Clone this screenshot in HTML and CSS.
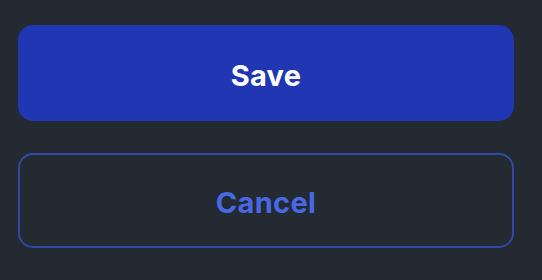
FILE: index.html
```html
<!DOCTYPE html>
<html>
<head>
<meta charset="utf-8">
<link rel="stylesheet" href="styles.css">
</head>
<body>
<div class="actions">
  <button class="btn btn-primary">Save</button>
  <button class="btn btn-outline">Cancel</button>
</div>
</body>
</html>
```
FILE: styles.css
```css
html, body {
  margin: 0;
  padding: 0;
  background: #232a32;
  width: 542px;
  height: 280px;
  overflow: hidden;
}
.actions {
  display: flex;
  flex-direction: column;
  gap: 32px;
  padding: 25px 28px 0 18px;
}
.btn {
  display: flex;
  align-items: center;
  justify-content: center;
  width: 496px;
  height: 96px;
  padding: 4px 0 0 0;
  border-radius: 15px;
  font-family: Inter, "Liberation Sans", sans-serif;
  font-weight: 700;
  font-size: 29px;
  letter-spacing: 0.3px;
  box-sizing: border-box;
  cursor: pointer;
}
.btn-primary {
  background: #2036b2;
  color: #ffffff;
  border: none;
}
.btn-outline {
  height: 95px;
  background: transparent;
  color: #4868e6;
  border: 2px solid #2f4aa6;
}
```
